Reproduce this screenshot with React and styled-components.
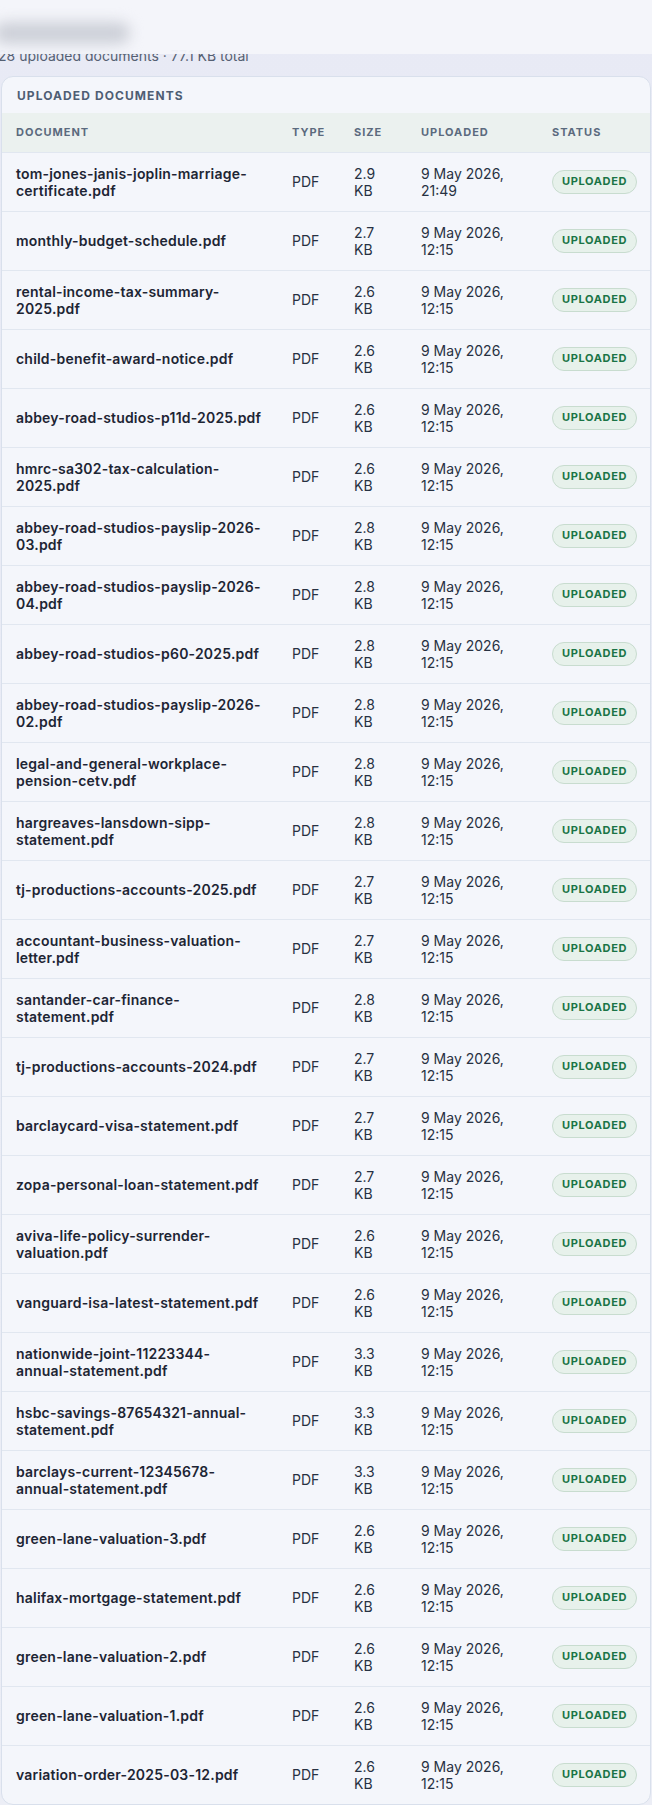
import React from "react";
import styled, { createGlobalStyle } from "styled-components";

const GlobalStyle = createGlobalStyle`
  html, body {
    margin: 0;
    padding: 0;
    background: #e9ebf5;
    font-family: Inter, "Noto Sans", "Liberation Sans", sans-serif;
    -webkit-font-smoothing: antialiased;
  }
`;

const Page = styled.div`
  position: relative;
  width: 652px;
  min-height: 1805px;
  padding: 0 1px 1px;
  box-sizing: border-box;
  background: linear-gradient(180deg, #e8eaf5 0%, #eceef6 100%);
`;

const TopBar = styled.div`
  position: absolute;
  top: 0;
  left: 0;
  right: 0;
  height: 54px;
  z-index: 2;
  background: rgba(244, 245, 250, 0.97);
  overflow: hidden;
`;

const BlurTitle = styled.div`
  margin: 22px 0 0 -6px;
  width: 136px;
  height: 22px;
  border-radius: 11px;
  background: #cdd0d8;
  filter: blur(7px);
`;

const Summary = styled.p`
  margin: 0;
  padding-top: 46px;
  line-height: 20px;
  font-size: 14px;
  color: #556072;
  text-indent: -3px;
`;

const Card = styled.section`
  margin-top: 10px;
  background: #f4f6fb;
  border: 1px solid #d9e0ec;
  border-radius: 12px;
  overflow: hidden;
`;

const CardTitle = styled.h2`
  margin: 0;
  padding: 11px 15px 0;
  height: 36px;
  box-sizing: border-box;
  font-size: 12px;
  line-height: 15px;
  font-weight: 700;
  letter-spacing: 0.09em;
  text-transform: uppercase;
  color: #4f5e74;
`;

const Table = styled.table`
  width: 100%;
  border-collapse: collapse;
  table-layout: fixed;
`;

const HeadRow = styled.tr`
  background: #ebf1ef;
  height: 39px;
`;

const Th = styled.th`
  padding: 0 14px;
  text-align: left;
  font-size: 11px;
  font-weight: 700;
  letter-spacing: 0.09em;
  text-transform: uppercase;
  color: #5b6a7e;
`;

const Row = styled.tr`
  border-top: 1px solid #e1e7f0;
`;

const Td = styled.td`
  padding: 12px 14px;
  height: 34px;
  vertical-align: middle;
  font-size: 14px;
  line-height: 17px;
  color: #273142;
`;

const Name = styled(Td)`
  padding-right: 16px;
  font-weight: 600;
  letter-spacing: 0.2px;
  color: #1d2534;
`;

const Badge = styled.span`
  display: inline-flex;
  align-items: center;
  height: 22px;
  padding: 0 9px;
  border: 1px solid #c8dccf;
  border-radius: 999px;
  background: #e7f1eb;
  color: #1a7446;
  font-size: 11px;
  font-weight: 700;
  letter-spacing: 0.06em;
`;

const docs = [
  ["tom-jones-janis-joplin-marriage-certificate.pdf", "2.9 KB", "21:49"],
  ["monthly-budget-schedule.pdf", "2.7 KB"],
  ["rental-income-tax-summary-2025.pdf", "2.6 KB"],
  ["child-benefit-award-notice.pdf", "2.6 KB"],
  ["abbey-road-studios-p11d-2025.pdf", "2.6 KB"],
  ["hmrc-sa302-tax-calculation-2025.pdf", "2.6 KB"],
  ["abbey-road-studios-payslip-2026-03.pdf", "2.8 KB"],
  ["abbey-road-studios-payslip-2026-04.pdf", "2.8 KB"],
  ["abbey-road-studios-p60-2025.pdf", "2.8 KB"],
  ["abbey-road-studios-payslip-2026-02.pdf", "2.8 KB"],
  ["legal-and-general-workplace-pension-cetv.pdf", "2.8 KB"],
  ["hargreaves-lansdown-sipp-statement.pdf", "2.8 KB"],
  ["tj-productions-accounts-2025.pdf", "2.7 KB"],
  ["accountant-business-valuation-letter.pdf", "2.7 KB"],
  ["santander-car-finance-statement.pdf", "2.8 KB"],
  ["tj-productions-accounts-2024.pdf", "2.7 KB"],
  ["barclaycard-visa-statement.pdf", "2.7 KB"],
  ["zopa-personal-loan-statement.pdf", "2.7 KB"],
  ["aviva-life-policy-surrender-valuation.pdf", "2.6 KB"],
  ["vanguard-isa-latest-statement.pdf", "2.6 KB"],
  ["nationwide-joint-11223344-annual-statement.pdf", "3.3 KB"],
  ["hsbc-savings-87654321-annual-statement.pdf", "3.3 KB"],
  ["barclays-current-12345678-annual-statement.pdf", "3.3 KB"],
  ["green-lane-valuation-3.pdf", "2.6 KB"],
  ["halifax-mortgage-statement.pdf", "2.6 KB"],
  ["green-lane-valuation-2.pdf", "2.6 KB"],
  ["green-lane-valuation-1.pdf", "2.6 KB"],
  ["variation-order-2025-03-12.pdf", "2.6 KB"],
];

export default function App() {
  return (
    <Page>
      <GlobalStyle />
      <TopBar>
        <BlurTitle />
      </TopBar>
      <Summary>28 uploaded documents · 77.1 KB total</Summary>
      <Card>
        <CardTitle>Uploaded documents</CardTitle>
        <Table>
          <colgroup>
            <col style={{ width: 276 }} />
            <col style={{ width: 62 }} />
            <col style={{ width: 67 }} />
            <col style={{ width: 131 }} />
            <col style={{ width: 112 }} />
          </colgroup>
          <thead>
            <HeadRow>
              <Th>Document</Th>
              <Th>Type</Th>
              <Th>Size</Th>
              <Th>Uploaded</Th>
              <Th>Status</Th>
            </HeadRow>
          </thead>
          <tbody>
            {docs.map(([name, size, time]) => (
              <Row key={name}>
                <Name>{name}</Name>
                <Td>PDF</Td>
                <Td>{size}</Td>
                <Td>9 May 2026, {time || "12:15"}</Td>
                <Td>
                  <Badge>UPLOADED</Badge>
                </Td>
              </Row>
            ))}
          </tbody>
        </Table>
      </Card>
    </Page>
  );
}
